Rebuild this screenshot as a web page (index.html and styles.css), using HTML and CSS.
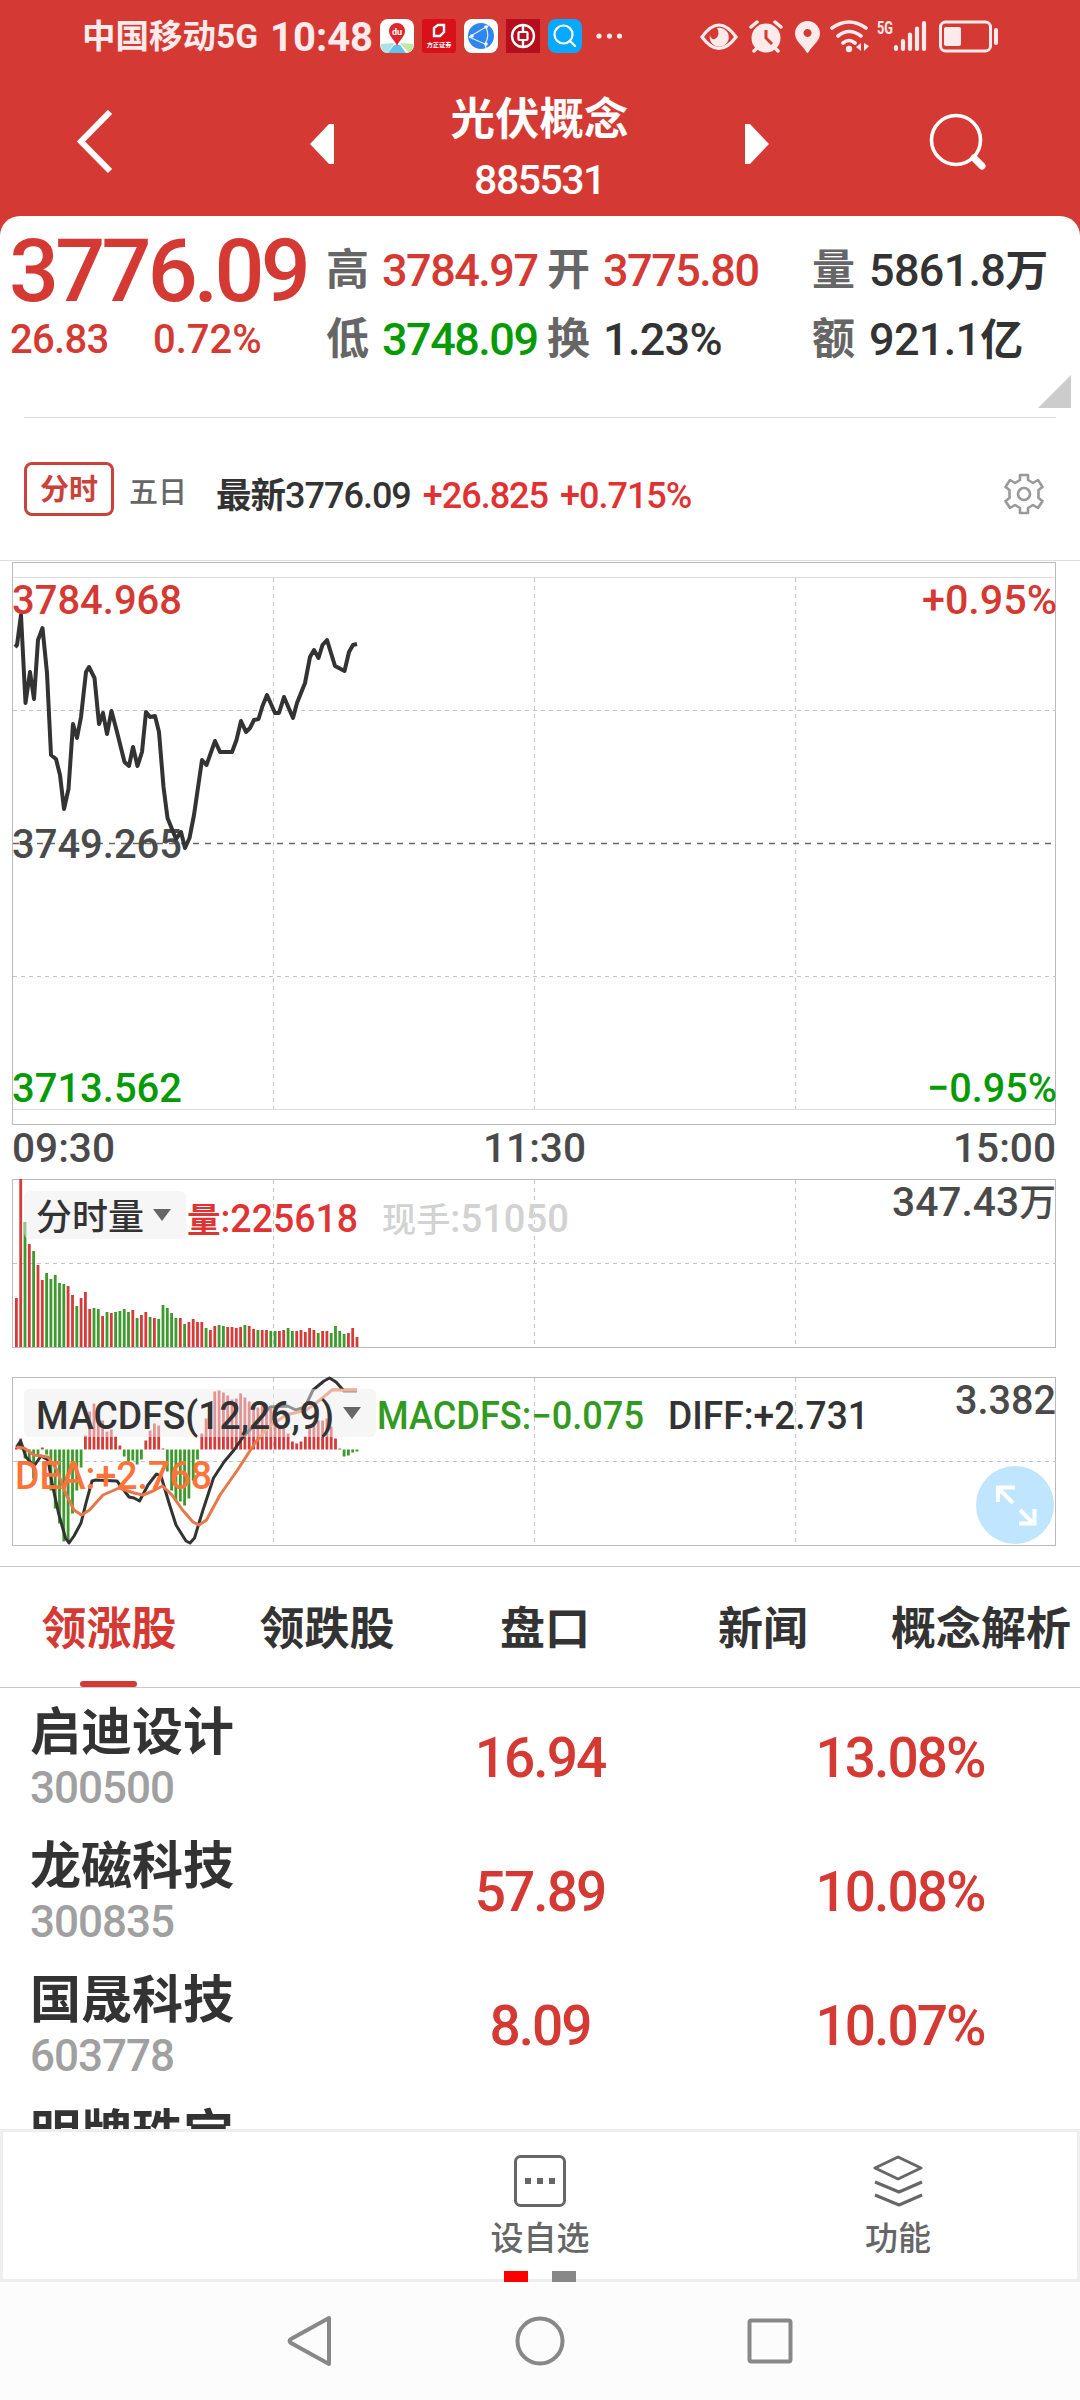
FILE: index.html
```html
<!DOCTYPE html>
<html lang="zh-CN">
<head>
<meta charset="UTF-8">
<meta name="viewport" content="width=device-width, initial-scale=1.0">
<title>光伏概念 885531</title>
<link rel="stylesheet" href="styles.css">
</head>
<body>

<header class="header">
  <div class="status">
    <span class="carrier">中国移动5G</span>
    <span class="clock">10:48</span>
    <div class="apps">
      <svg width="34" height="34" viewBox="0 0 34 34">
        <rect width="34" height="34" rx="8" fill="#fff"/>
        <path d="M1 25 L14 24 L8 34 Q1 34 1 27Z" fill="#a9e3e6"/>
        <path d="M14 26 L20 26 L26 34 L8 34Z" fill="#5fc3f0"/>
        <path d="M20 24 L33 25 L33 29 Q32 33 28 33Z" fill="#bfe8a0"/>
        <path d="M17 27 C15 21 9 18 9 12 A8 8 0 0 1 25 12 C25 18 19 21 17 27Z" fill="#e0252b"/>
        <text x="17" y="16" font-size="9" font-weight="700" fill="#fff" text-anchor="middle">du</text>
      </svg>
      <svg width="34" height="34" viewBox="0 0 34 34">
        <rect width="34" height="34" rx="3" fill="#d9101a"/>
        <path d="M12 9 L16 6 H22 V13 L18 17 H12Z" fill="none" stroke="#fff" stroke-width="2.4"/>
        <text x="17" y="28" font-size="6.2" font-weight="700" fill="#fff" text-anchor="middle">方正证券</text>
      </svg>
      <svg width="34" height="34" viewBox="0 0 34 34">
        <rect width="34" height="34" rx="8" fill="#fff"/>
        <circle cx="17" cy="17" r="13" fill="#2f86ee"/>
        <path d="M5 18 L22 8 M5 18 L21 25 M22 8 Q26 17 21 25 M22 8 L26 6 M21 25 L22 29" fill="none" stroke="#dcebff" stroke-width="1.3"/>
        <circle cx="22" cy="8" r="1.8" fill="#fff"/><circle cx="22" cy="25" r="1.8" fill="#fff"/><circle cx="8" cy="17" r="1.8" fill="#fff"/>
      </svg>
      <svg width="34" height="34" viewBox="0 0 34 34">
        <rect width="34" height="34" fill="#b50f1e"/>
        <circle cx="17" cy="17" r="11" fill="none" stroke="#fff" stroke-width="2.4"/>
        <rect x="12.500" y="13" width="9" height="8" rx="1" fill="none" stroke="#fff" stroke-width="2.2"/>
        <path d="M17 6 V13 M17 21 V28" stroke="#fff" stroke-width="2.4"/>
      </svg>
      <svg width="34" height="34" viewBox="0 0 34 34">
        <rect width="34" height="34" rx="8" fill="#06a9ff"/>
        <circle cx="15.500" cy="15.500" r="9" fill="none" stroke="#fff" stroke-width="2.2"/>
        <path d="M22 22 L27 27" stroke="#fff" stroke-width="2.4" stroke-linecap="round"/>
      </svg>
      <svg width="40" height="34" viewBox="0 0 40 34" fill="#fdeaea">
        <circle cx="9" cy="17" r="2.600"/><circle cx="19.500" cy="17" r="2.600"/><circle cx="29.500" cy="17" r="2.600"/>
      </svg>
    </div>
    <svg class="signals" width="300" height="34" viewBox="700 19 300 34" fill="none" stroke="#fdeaea">
      <path d="M702 37 Q719 13 736 37 Q719 60 702 37Z" stroke-width="3.2"/>
      <path d="M717 28 A9.500 9.500 0 1 1 710 35 Q711 40 715 39 Q721 35 717 28Z" fill="#fdeaea" stroke="none"/>
      <circle cx="766" cy="38" r="14.500" fill="#fdeaea" stroke="none"/>
      <path d="M766 30 V38 L772 44" stroke="#d43a33" stroke-width="3"/>
      <path d="M751 27 L757 22 M781 27 L775 22 M754 51 L757 48 M778 51 L775 48" stroke-width="3.500" stroke-linecap="round"/>
      <path d="M807.500 54 C804 46 795 42 795 33.500 A12.500 12.500 0 0 1 820 33.500 C820 42 811 46 807.500 54Z M807.500 29 a4 4 0 1 0 .1 0Z" fill="#fdeaea" fill-rule="evenodd" stroke="none"/>
      <path d="M832 28 Q849 16 866 28 M838 36 Q849 27 861 36 M843 43 Q849 38 855 43" stroke-width="3.600" stroke-linecap="round"/>
      <circle cx="849" cy="49" r="3.200" fill="#fdeaea" stroke="none"/>
      <path d="M861 43 V51 L856 47Z M864 43 L869 46 L864 51Z" fill="#fdeaea" stroke="none"/>
      <text x="877" y="34" font-size="18" font-weight="700" fill="#fdeaea" stroke="none" textLength="16" lengthAdjust="spacingAndGlyphs">5G</text>
      <path d="M896 47 V49 M903 41 V49 M910 34.500 V49 M917 28.500 V49 M924 23 V49" stroke-width="4.200" stroke-linecap="round"/>
      <rect x="940.500" y="22" width="50" height="29" rx="5" stroke-width="3"/>
      <rect x="944" y="27" width="17" height="19" rx="2" fill="#fdeaea" stroke="none"/>
      <path d="M996 30 V43" stroke-width="4" stroke-linecap="round"/>
    </svg>
  </div>
  <div class="nav">
    <svg width="36" height="64" viewBox="0 0 36 64"><path d="M33 2 L4 31.500 L33 61" fill="none" stroke="#fff" stroke-width="6"/></svg>
    <svg class="prev" width="24" height="40" viewBox="0 0 24 40"><path d="M24 0 H19 L0 20 L19 40 H24Z" fill="#fff"/></svg>
    <div class="title">
      <h1>光伏概念</h1>
      <span>885531</span>
    </div>
    <svg class="next" width="24" height="40" viewBox="0 0 24 40"><path d="M0 0 H5 L24 20 L5 40 H0Z" fill="#fff"/></svg>
    <svg width="58" height="58" viewBox="0 0 58 58" fill="none" stroke="#fff">
      <circle cx="27" cy="27" r="24.500" stroke-width="3.600"/>
      <path d="M45 45 L53 53" stroke-width="7" stroke-linecap="round"/>
    </svg>
  </div>
</header>

<section class="quote">
  <div class="quote-grid">
    <b class="price up">3776.09</b>
    <i>高</i><b class="up">3784.97</b>
    <i>开</i><b class="up">3775.80</b>
    <i>量</i><b class="amount">5861.8<em>万</em></b>
    <div class="change up"><span>26.83</span><span>0.72%</span></div>
    <i>低</i><b class="down">3748.09</b>
    <i>换</i><b class="amount">1.23%</b>
    <i>额</i><b class="amount">921.1<em>亿</em></b>
  </div>
  <div class="expand"></div>
</section>

<section class="period">
  <span class="period-tab">分时</span>
  <span class="period-day">五日</span>
  <p class="latest"><strong>最新</strong>3776.09 <span>+26.825</span> <span>+0.715%</span></p>
  <svg class="gear" width="42" height="42" viewBox="0 0 42 42" fill="none" stroke="#999" stroke-width="2.600" stroke-linejoin="round">
    <path d="M17 2 H25 V7 L30 10 L35 7 L39.500 14 L35.500 17 V25 L39.500 28 L35 35 L30 32 L25 35 V40 H17 V35 L12 32 L7 35 L2.500 28 L6.500 25 V17 L2.500 14 L7 7 L12 10 L17 7Z"/>
    <circle cx="21" cy="21" r="6"/>
  </svg>
</section>

<svg class="charts" width="1080" height="1006" viewBox="0 560 1080 1006">
  <!-- price -->
  <g class="frame">
    <path class="light" d="M0 560.500 H1080 M13 577.500 H1056 M13 1109.500 H1056"/>
    <rect x="12.500" y="562.500" width="1043" height="562"/>
    <path class="dash" d="M13 710.500 H1056 M13 976.500 H1056 M273.500 578 V1109 M534.500 578 V1109 M795.500 578 V1109"/>
    <path class="base" d="M13 843.500 H1056"/>
  </g>
  <g class="axis">
    <text x="12" y="1102" textLength="170" class="down">3713.562</text>
    <text x="1057" y="614" textLength="135" class="up end">+0.95%</text>
    <text x="1057" y="1102" textLength="130" class="down end">−0.95%</text>
    <text x="12" y="1162" textLength="103">09:30</text>
    <text x="483" y="1162" textLength="103">11:30</text>
    <text x="1056" y="1162" textLength="103" class="end">15:00</text>
    <text x="12" y="858" textLength="170">3749.265</text>
  </g>
  <polyline class="line" points="15,647 17,645 21,615 25.5,703 30,672 34,699 38,640 42.5,628 47,673 51,755 56,759 60,775 64,809 68.5,789 73,724 77,738 81,717 86,672 89,667 94.5,678 99,724 103,713 107,734 111.5,711 117,732 124.5,762 129,766 133,747 137.5,766 142,752 146,712 150,717 155,716 159,732 163.5,787 167.5,818 176,839 181,832 185,848 189.5,838 194,815 202,760 206.5,765 215,741 220,752 232,752 236.5,740 241,721 246,732 250,728 254,720 258.5,719 262.5,706 267,695 275,713 279,713 284,697 293,718 297,703 305,683 310,657 314,650 318.5,658 322.5,645 327,640 335,666 344.5,671 349,652 353,645 357,644"/>
  <g class="axis">
    <text x="12" y="614" textLength="170" class="up">3784.968</text>
  </g>

  <!-- volume -->
  <g class="frame">
    <rect x="12.500" y="1179.500" width="1043" height="168"/>
    <path class="dash" d="M13 1263.500 H1056 M273.500 1180 V1347 M534.500 1180 V1347 M795.500 1180 V1347"/>
  </g>
  <g id="volume"></g>
  <rect class="pill" x="24" y="1191" width="162" height="48" rx="6"/>
  <path d="M153 1209 H171 L162 1221Z" fill="#666"/>
  <g class="label">
    <text x="36" y="1230" textLength="108" font-size="36">分时量</text>
    <text x="187" y="1232" textLength="171" fill="#e03434"><tspan font-size="34" font-weight="700">量</tspan>:225618</text>
    <text x="382" y="1232" textLength="187" fill="#d2d2d2"><tspan font-size="34">现手</tspan>:51050</text>
  </g>
  <g class="axis">
    <text x="1056" y="1216" textLength="164" class="end">347.43<tspan font-size="37">万</tspan></text>
  </g>

  <!-- macd -->
  <g class="frame">
    <rect x="12.500" y="1377.500" width="1043" height="168"/>
    <path class="dash" d="M13 1461.500 H1056 M273.500 1378 V1545 M534.500 1378 V1545 M795.500 1378 V1545"/>
  </g>
  <g id="macd"></g>
  <path d="M16 1447 L20.500 1439 L25 1449Z" fill="#333"/>
  <polyline class="line diff" points="16.5,1447 20.5,1441 26,1457 34,1466 41,1456 48,1460 52,1483 58.5,1513 65.5,1538 69,1543 74,1536 81,1523 86,1503 92,1481 96,1480 117,1481 129,1497 134,1498 139.5,1501 148,1485 156.5,1474 161,1476 169,1503 176,1525 186,1541 190,1543 194.5,1538 203,1510 213.5,1478 224,1462 234,1450 243,1437 256.5,1423 270,1407 287.5,1406 296,1410 305,1407 313,1390 324,1381 329.5,1378 336,1382 344,1391 357,1391"/>
  <polyline class="line dea" points="16.5,1447 24,1448 34,1455 48,1457 57,1470 65,1492 74,1510 81.5,1515 89.5,1510 103,1495 119,1488 134,1493 143,1495 153,1491 162.5,1486 172,1495 182.5,1510 193,1522 199,1525 206.5,1520 220,1495 237.5,1470 255,1443 268.5,1427 286,1415 306.5,1410 320,1400 332,1390 357,1390"/>
  <rect class="pill" x="24" y="1389" width="352" height="48" rx="6"/>
  <path d="M343 1407 H361 L352 1419Z" fill="#666"/>
  <g class="label">
    <text x="36" y="1429" textLength="298">MACDFS(12,26,9)</text>
    <text x="377" y="1429" textLength="267" fill="#329a20">MACDFS:−0.075</text>
    <text x="668" y="1429" textLength="201">DIFF:+2.731</text>
    <text x="15" y="1489" textLength="197" fill="#ff733a">DEA:+2.768</text>
  </g>
  <g class="axis">
    <text x="1056" y="1414" textLength="101" class="end">3.382</text>
  </g>
  <circle cx="1015" cy="1505" r="39" fill="#bfe5ff"/>
  <path d="M1013 1503 L998 1488 M998 1502 V1487.500 H1015 M1020 1510 L1034 1524 M1019 1523.500 H1034.500 V1509" fill="none" stroke="#fff" stroke-width="4"/>
</svg>

<nav class="tabs">
  <span class="tab active">领涨股</span>
  <span class="tab">领跌股</span>
  <span class="tab">盘口</span>
  <span class="tab">新闻</span>
  <span class="tab">概念解析</span>
</nav>

<main class="stocks">
  <div class="stock">
    <div class="name">启迪设计<small>300500</small></div>
    <b>16.94</b><b>13.08%</b>
  </div>
  <div class="stock">
    <div class="name">龙磁科技<small>300835</small></div>
    <b>57.89</b><b>10.08%</b>
  </div>
  <div class="stock">
    <div class="name">国晟科技<small>603778</small></div>
    <b>8.09</b><b>10.07%</b>
  </div>
  <div class="stock">
    <div class="name">明牌珠宝</div>
  </div>
</main>

<footer class="toolbar">
  <div></div>
  <div class="tool">
    <svg width="52" height="52" viewBox="0 0 52 52">
      <rect x="1.500" y="1.500" width="49" height="49" rx="5" fill="none" stroke="#666" stroke-width="3"/>
      <path d="M11 23 h6 v6 h-6Z M23 23 h6 v6 h-6Z M35 23 h6 v6 h-6Z" fill="#666"/>
    </svg>
    设自选
  </div>
  <div class="tool">
    <svg width="52" height="52" viewBox="0 0 52 52" fill="none" stroke="#666" stroke-width="3" stroke-linejoin="round">
      <path d="M26 2 L49 13 L26 24 L3 13Z M3 27 L27 37 L50 27 M3 40 L27 50 L50 40"/>
    </svg>
    功能
  </div>
  <div class="pager"><span></span><span></span></div>
</footer>

<div class="system">
  <svg width="46" height="54" viewBox="0 0 46 54"><path d="M42 4 V50 L4 29 Q1 27 4 25Z" fill="none" stroke="#888" stroke-width="4" stroke-linejoin="round"/></svg>
  <svg width="50" height="50" viewBox="0 0 50 50"><circle cx="25" cy="25" r="22.500" fill="none" stroke="#888" stroke-width="4"/></svg>
  <svg width="46" height="46" viewBox="0 0 46 46"><rect x="2.500" y="2.500" width="41" height="41" rx="2" fill="none" stroke="#888" stroke-width="4"/></svg>
</div>

<script>
  const red = "#d83a3a";
  const green = "#3d9a2c";
  const step = 4.312;
  const startX = 15;

  // the sign of a volume is only its colour
  const volume = [49,168,-125,103,-96,82,67,-74,-68,-72,-64,-63,61,52,-41,49,55,38,-39,-38,31,-35,34,-35,-36,-38,-35,37,-29,32,35,-30,29,-28,-42,-39,-34,-29,29,-23,25,28,25,25,-19,17,21,-22,-21,20,20,19,20,-22,21,18,-17,17,17,-16,-16,16,17,-19,-16,16,17,15,19,17,-14,16,16,-14,-21,-16,-13,14,19,10];
  const macd = [2,11,-9,-16,-29,-7,2,-5,-41,-59,-74,-92,-91,-64,-41,-18,14,38,46,33,29,18,20,13,4,-7,-12,-11,-15,-10,9,19,26,24,1,-22,-41,-51,-52,-56,-49,-31,-10,16,31,46,58,59,57,54,50,51,56,52,48,43,42,44,45,41,31,24,21,16,8,6,8,13,21,26,29,29,31,23,11,1,-7,-6,-3,-2];

  function addBar(parent, i, y, height, color) {
    const bar = document.createElementNS("http://www.w3.org/2000/svg", "rect");
    bar.setAttribute("x", (startX + i * step).toFixed(1));
    bar.setAttribute("y", y);
    bar.setAttribute("width", 2.8);
    bar.setAttribute("height", height);
    bar.setAttribute("fill", color);
    parent.appendChild(bar);
  }

  volume.forEach((v, i) => {
    const h = Math.abs(v);
    addBar(document.getElementById("volume"), i, 1347 - h, h, v > 0 ? red : green);
  });

  macd.forEach((v, i) => {
    addBar(document.getElementById("macd"), i, v > 0 ? 1449.5 - v : 1449.5, Math.abs(v), v > 0 ? red : green);
  });

  document.querySelectorAll(".charts text").forEach(t => t.setAttribute("lengthAdjust", "spacingAndGlyphs"));
</script>

</body>
</html>
```
FILE: styles.css
```css
* {
  box-sizing: border-box;
}
body {
  width: 1080px;
  height: 2400px;
  margin: 0;
  display: flex;
  flex-direction: column;
  overflow: hidden;
  background: #fff;
  color: #333;
  font-family: Roboto, "Noto Sans CJK SC", sans-serif;
}
svg {
  display: block;
  flex-shrink: 0;
}
b, i, em {
  font-style: normal;
}
.up {
  color: #d43a33;
  fill: #d43a33;
}
.down {
  color: #069a06;
  fill: #069a06;
}

.header {
  height: 216px;
  background: #d43a33;
  color: #fff;
}
.status {
  display: flex;
  align-items: center;
  height: 72px;
  padding-left: 82px;
  color: #fdeaea;
}
.carrier {
  width: 188px;
  padding-top: 2px;
  font-size: 33.5px;
  font-weight: 700;
  line-height: 72px;
  white-space: nowrap;
}
.clock {
  width: 110px;
  padding-top: 3px;
  font-size: 40px;
  font-weight: 700;
}
.apps {
  display: flex;
  gap: 8px;
}
.signals {
  margin-left: 70px;
}
.nav {
  display: flex;
  align-items: center;
  height: 140px;
  padding-left: 77px;
}
.prev {
  margin-left: 197px;
  margin-top: 4px;
}
.next {
  margin-top: 4px;
}
.title {
  width: 411px;
  padding-top: 16px;
  text-align: center;
}
.title h1 {
  margin: 0;
  font-size: 44.5px;
  line-height: 60px;
}
.title span {
  display: block;
  font-size: 41px;
  font-weight: 500;
  line-height: 60px;
  letter-spacing: -1.5px;
}
.nav svg:last-child {
  margin-left: 160px;
}

.quote {
  position: relative;
  height: 202px;
  padding-top: 20px;
  background: #fff;
  border-radius: 20px 20px 0 0;
  box-shadow: 0 -20px 0 #d43a33;
}
.quote::after {
  content: "";
  position: absolute;
  left: 24px;
  right: 24px;
  bottom: 0;
  height: 1px;
  background: #ddd;
}
.quote-grid {
  display: grid;
  grid-template-columns: 326px 56px 165px 56px 209px 57px 1fr;
  grid-template-rows: 69px 69px;
  align-items: center;
  font-size: 45px;
  line-height: 69px;
  white-space: nowrap;
}
.quote-grid b {
  font-weight: 500;
  letter-spacing: -1.5px;
}
.quote-grid .amount {
  letter-spacing: -0.7px;
}
.quote-grid i {
  color: #666;
  font-size: 43px;
  font-weight: 700;
}
.quote-grid em {
  font-size: 43px;
  font-weight: 700;
}
.quote-grid .price {
  padding-left: 9px;
  font-size: 88px;
  letter-spacing: -3.8px;
}
.change {
  display: flex;
  padding-left: 10px;
  font-size: 40px;
  font-weight: 500;
  letter-spacing: -0.7px;
}
.change span:first-child {
  width: 143px;
}
.change span:last-child {
  letter-spacing: 0;
}
.expand {
  position: absolute;
  right: 9px;
  bottom: 10px;
  width: 33px;
  height: 33px;
  background: #ccc;
  clip-path: polygon(100% 0, 100% 100%, 0 100%);
}

.period {
  display: flex;
  align-items: center;
  height: 142px;
  padding: 0 35px 0 24px;
}
.period-tab {
  width: 90px;
  height: 54px;
  margin-top: -1px;
  border: 3px solid #c9433b;
  border-radius: 8px;
  color: #c9433b;
  font-size: 29px;
  font-weight: 700;
  line-height: 50px;
  text-align: center;
}
.period-day {
  margin-left: 15px;
  padding-top: 1px;
  color: #666;
  font-size: 29px;
  font-weight: 500;
}
.latest {
  margin: 7px auto 0 29px;
  font-size: 36px;
  font-weight: 500;
  letter-spacing: -1px;
  word-spacing: 4px;
}
.latest strong {
  font-size: 35.5px;
  font-weight: 700;
}
.latest span {
  color: #e03232;
}
.gear {
  margin-top: 10px;
}

.frame {
  fill: none;
  stroke: #bbb;
  stroke-width: 1;
}
.frame .light {
  stroke: #ddd;
}
.frame .dash {
  stroke: #c4c4c4;
  stroke-dasharray: 4 4;
}
.frame .base {
  stroke: #666;
  stroke-width: 1.6;
  stroke-dasharray: 6 6;
}
.axis text {
  font-size: 41px;
  font-weight: 500;
}
.axis text:not(.up):not(.down) {
  fill: #4a4a4a;
}
.end {
  text-anchor: end;
}
.label {
  fill: #333;
  font-size: 38px;
  font-weight: 500;
}
.line {
  fill: none;
  stroke: #333;
  stroke-width: 4;
  stroke-linejoin: round;
}
.diff {
  stroke-width: 3;
}
.dea {
  stroke: #e8774a;
  stroke-width: 3;
}
.pill {
  fill: #eee;
  fill-opacity: .5;
}

.tabs {
  display: flex;
  flex-shrink: 0;
  height: 122px;
  border-top: 1px solid #c8c8c8;
  border-bottom: 1px solid #c8c8c8;
}
.tab {
  position: relative;
  flex: 0 0 218px;
  padding-top: 3px;
  font-size: 45px;
  font-weight: 700;
  line-height: 120px;
  text-align: center;
}
.tab.active {
  color: #d43a33;
}
.tab.active::after {
  content: "";
  position: absolute;
  left: 80px;
  bottom: 0;
  width: 57px;
  height: 6px;
  border-radius: 3px;
  background: #d43a33;
}

.stocks {
  height: 441px;
  overflow: hidden;
}
.stock {
  display: grid;
  grid-template-columns: 360px 360px 360px;
  align-items: center;
  height: 134px;
}
.name {
  align-self: start;
  padding: 15px 0 0 30px;
  font-size: 51px;
  font-weight: 700;
  line-height: 60px;
}
.name small {
  display: block;
  color: #a0a0a0;
  font-size: 44px;
  font-weight: 500;
  line-height: 50px;
  letter-spacing: -1px;
}
.stock b {
  padding-top: 5px;
  color: #d43a33;
  font-size: 55px;
  font-weight: 500;
  letter-spacing: -2px;
  text-align: center;
}

.toolbar {
  position: relative;
  display: grid;
  grid-template-columns: 1fr 1fr 1fr;
  height: 153px;
  border: 3px solid #eee;
  background: #fff;
}
.tool {
  display: flex;
  flex-direction: column;
  align-items: center;
  padding-top: 23px;
  color: #666;
  font-size: 33px;
  font-weight: 500;
  line-height: 64px;
}
.pager {
  position: absolute;
  left: 501px;
  bottom: -3px;
  display: flex;
  gap: 24px;
}
.pager span {
  width: 24px;
  height: 11px;
  background: #888;
}
.pager span:first-child {
  background: #f00;
}

.system {
  display: flex;
  justify-content: center;
  align-items: center;
  gap: 182px;
  height: 118px;
  background: #fcfcfc;
}
```
